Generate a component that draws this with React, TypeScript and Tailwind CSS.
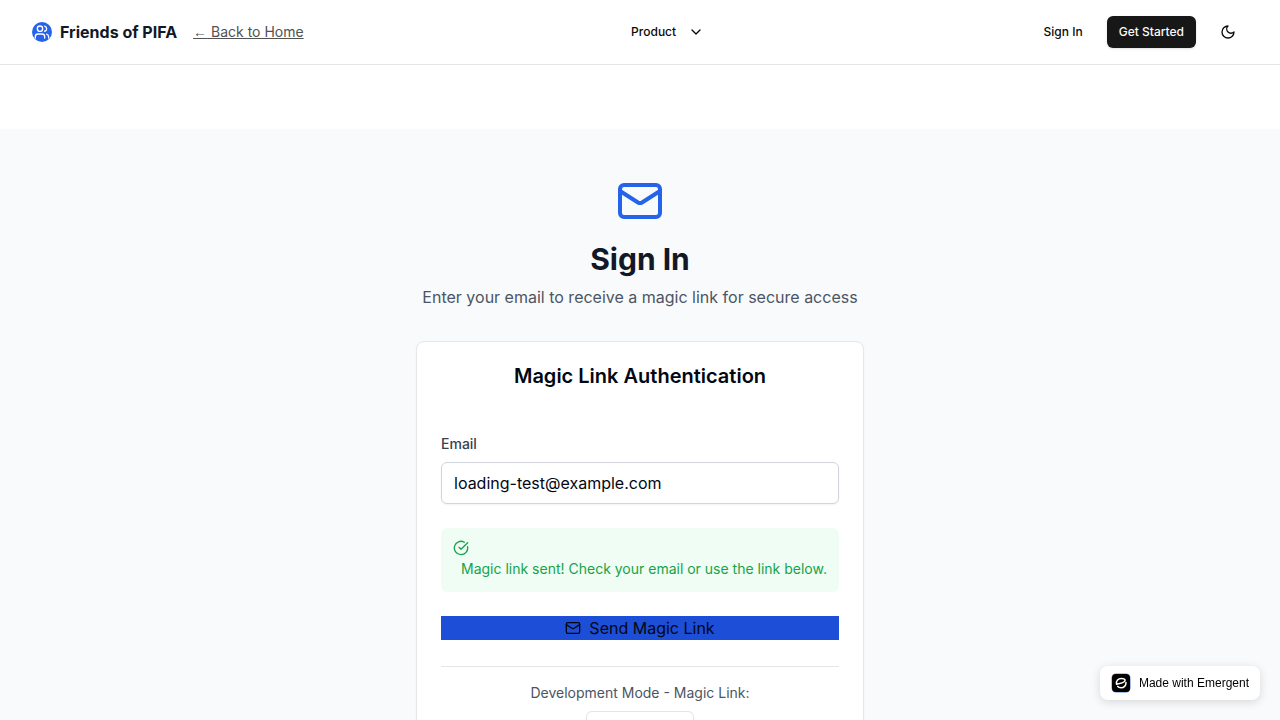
import { useState } from "react";
import { ChevronDown, CircleCheckBig, ExternalLink, Mail, Users } from "lucide-react";

function MoonIcon() {
  return (
    <svg
      viewBox="0 0 24 24"
      className="size-4"
      fill="none"
      stroke="currentColor"
      strokeWidth="2"
      strokeLinecap="round"
      strokeLinejoin="round"
      aria-hidden="true"
    >
      <path d="M12 3a6 6 0 0 0 9 9 9 9 0 1 1-9-9Z" />
    </svg>
  );
}

function Header() {
  return (
    <header className="border-b border-[#e5e5e5] bg-white">
      <div className="flex h-16 items-center justify-between px-8">
        <div className="flex items-center gap-4">
          <div className="flex items-center gap-2">
            <span className="flex size-5 items-center justify-center rounded-full bg-[#2563eb] text-white">
              <Users className="size-4" aria-hidden="true" />
            </span>
            <span className="text-base font-bold text-[#111827]">Friends of PIFA</span>
          </div>
          <a href="/" className="text-sm text-[#525252] underline">
            <span className="font-['Liberation_Sans',sans-serif]">←</span> Back to Home
          </a>
        </div>
        <nav>
          <button type="button" className="flex h-8 items-center gap-3 px-3 text-xs font-medium text-[#0a0a0a]">
            Product
            <ChevronDown className="size-4" aria-hidden="true" />
          </button>
        </nav>
        <div className="flex items-center gap-3">
          <button type="button" className="h-8 px-3 text-xs font-medium text-[#0a0a0a]">
            Sign In
          </button>
          <button
            type="button"
            className="h-8 rounded-md bg-[#171717] px-3 text-xs font-medium text-[#fafafa] shadow-sm"
          >
            Get Started
          </button>
          <button
            type="button"
            aria-label="Switch to dark theme"
            className="flex h-8 w-10 items-center justify-center text-[#0a0a0a]"
          >
            <MoonIcon />
          </button>
        </div>
      </div>
    </header>
  );
}

function SignInCard() {
  const [email, setEmail] = useState("loading-test@example.com");

  return (
    <section className="rounded-lg border border-[#e5e7eb] bg-white shadow-xs">
      <h2 className="p-6 text-center text-xl leading-5 font-semibold text-[#030712]">Magic Link Authentication</h2>
      <div className="p-6">
        <form className="flex flex-col gap-6" onSubmit={(event) => event.preventDefault()}>
          <div className="flex flex-col gap-2">
            <label htmlFor="email" className="text-sm font-medium text-[#374151]">
              Email
            </label>
            <input
              id="email"
              type="email"
              value={email}
              onChange={(event) => setEmail(event.target.value)}
              className="w-full rounded-md border border-[#d1d5db] bg-white px-3 py-2 text-base text-[#030712] shadow-xs"
            />
          </div>
          <div role="status" className="flex flex-col gap-0.5 rounded-md bg-[#f0fdf4] p-3 text-[#16a34a]">
            <CircleCheckBig className="size-4" aria-hidden="true" />
            <p className="ml-2 text-sm leading-[22px]">Magic link sent! Check your email or use the link below.</p>
          </div>
          <button
            type="submit"
            className="flex items-center justify-center gap-2 bg-[#1d4ed8] text-base text-[#030712]"
          >
            <Mail className="size-4" aria-hidden="true" />
            Send Magic Link
          </button>
        </form>
        <div className="mt-[26px] flex flex-col items-center gap-2 border-t border-[#e5e5e5] pt-4">
          <p className="text-sm text-[#4b5563]">Development Mode - Magic Link:</p>
          <button
            type="button"
            className="flex h-9 items-center gap-2 rounded-md border border-[#e5e5e5] bg-white px-3 text-xs font-medium text-[#0a0a0a] shadow-xs"
          >
            <ExternalLink className="size-4" aria-hidden="true" />
            Open Link
          </button>
        </div>
      </div>
    </section>
  );
}

function EmergentLogo() {
  return (
    <svg viewBox="0 0 20 20" className="size-5" aria-hidden="true">
      <defs>
        <linearGradient id="edge" x1="0" y1="0" x2="1" y2="1">
          <stop offset="0" stopColor="#e0526a" />
          <stop offset="0.45" stopColor="#7a8fd0" />
          <stop offset="1" stopColor="#2f6fe0" />
        </linearGradient>
      </defs>
      <rect x="0.5" y="0.5" width="19" height="19" rx="4.5" fill="url(#edge)" />
      <rect x="1" y="1" width="18" height="18" rx="4" fill="#000000" />
      <g fill="none" stroke="#ffffff" strokeWidth="1.5" strokeLinecap="round" strokeLinejoin="round">
        <path d="M5.500 11.200C4.900 7.800 7.200 5.400 10.300 5.400c2.300 0 3.800.8 3.800 1.900 0 1.600-4.200 3.200-8.600 3.900" />
        <path d="M15 9.500c.2 3.300-2.200 5.300-4.900 5.300-1.700 0-2.900-.6-3.400-1.400" />
      </g>
    </svg>
  );
}

export default function App() {
  return (
    <div className="min-h-screen bg-white font-['Inter',sans-serif] text-[#030712]">
      <Header />
      <main className="mt-16 min-h-screen bg-[#f9fafb] px-4 py-12">
        <div className="mx-auto flex max-w-md flex-col gap-8">
          <div className="flex flex-col items-center text-center">
            <Mail className="size-12 text-[#2563eb]" aria-hidden="true" />
            <h1 className="mt-4 text-3xl leading-9 font-bold text-[#111827]">Sign In</h1>
            <p className="mt-2 text-base text-[#4b5563]">Enter your email to receive a magic link for secure access</p>
          </div>
          <SignInCard />
        </div>
      </main>
      <a
        href="#emergent"
        className="fixed right-5 bottom-5 flex items-center gap-2 rounded-lg bg-white px-[11px] py-[7px] font-['Liberation_Sans',sans-serif] text-xs text-black shadow-[0_2px_10px_rgba(0,0,0,0.14)]"
      >
        <EmergentLogo />
        Made with Emergent
      </a>
    </div>
  );
}
